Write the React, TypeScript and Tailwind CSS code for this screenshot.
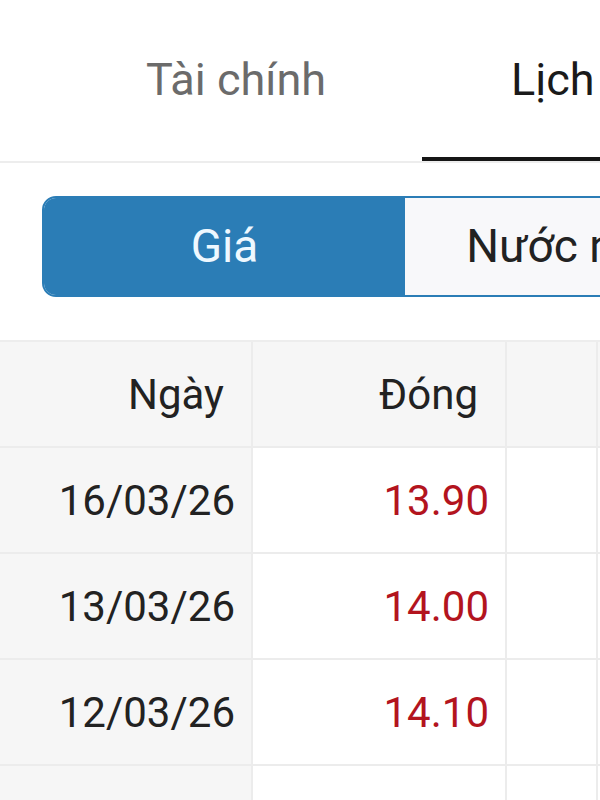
import React from 'react'

const rows = [
  { date: '16/03/26', close: '13.90' },
  { date: '13/03/26', close: '14.00' },
  { date: '12/03/26', close: '14.10' },
  { date: '', close: '' },
]

export default function App() {
  return (
    <div className="w-[600px] h-[800px] overflow-hidden bg-white font-['Roboto',sans-serif]">
      {/* Top tabs */}
      <div className="flex h-[163px] border-b-2 border-[#ededed] pl-[55px] overflow-hidden">
        <div className="shrink-0 pl-[91px] pr-[96px] flex items-center pb-[2px] text-[45px] text-[#6b6b6b] whitespace-nowrap">
          Tài chính
        </div>
        <div className="shrink-0 px-[89px] relative flex items-center pb-[2px] text-[45px] text-[#1a1a1a] whitespace-nowrap">
          Lịch sử giá
          <div className="absolute left-0 right-0 bottom-[-2px] h-[6px] bg-[#161616]" />
        </div>
      </div>

      {/* Segmented control */}
      <div className="pt-[33px] pl-[42px]">
        <div className="flex w-[724px] h-[101px] rounded-[14px] border-2 border-[#2b7db6] overflow-hidden">
          <div className="w-[361px] shrink-0 bg-[#2b7db6] flex items-center justify-center text-[46px] text-[#eef8ff]">
            Giá
          </div>
          <div className="flex-1 bg-[#f8f8fa] flex items-center justify-center text-[46px] text-[#222] whitespace-nowrap">
            Nước ngoài
          </div>
        </div>
      </div>

      {/* Table */}
      <div className="mt-[43px] border-t-2 border-[#ededed]">
        <div className="flex h-[106px] bg-[#f6f6f6] border-b-2 border-[#ececec]">
          <div className="w-[253px] shrink-0 flex items-center justify-end pr-[27px] border-r-2 border-[#ececec] text-[42px] text-[#222]">
            Ngày
          </div>
          <div className="w-[254px] shrink-0 flex items-center justify-end pr-[27px] border-r-2 border-[#ececec] text-[42px] text-[#222]">
            Đóng
          </div>
          <div className="w-[91px] shrink-0 border-r-2 border-[#ececec]" />
        </div>
        {rows.map((r, i) => (
          <div key={i} className="flex h-[106px] border-b-2 border-[#ececec]">
            <div className="w-[253px] shrink-0 bg-[#f6f6f6] flex items-center justify-end pr-[16px] border-r-2 border-[#ececec] text-[42px] text-[#222]">
              {r.date}
            </div>
            <div className="w-[254px] shrink-0 bg-white flex items-center justify-end pr-[16px] border-r-2 border-[#ececec] text-[42px] text-[#b3141e]">
              {r.close}
            </div>
            <div className="w-[91px] shrink-0 bg-white border-r-2 border-[#ececec]" />
          </div>
        ))}
      </div>
    </div>
  )
}
